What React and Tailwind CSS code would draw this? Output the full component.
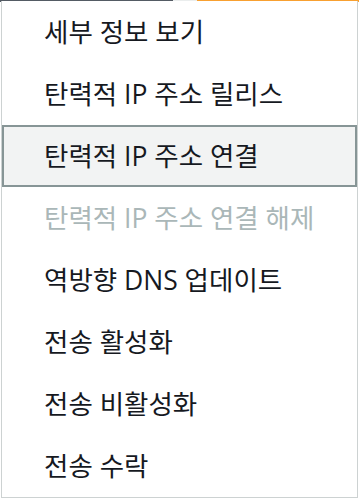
export default function App() {
  const items = [
    { label: "세부 정보 보기" },
    { label: "탄력적 IP 주소 릴리스" },
    { label: "탄력적 IP 주소 연결", active: true },
    { label: "탄력적 IP 주소 연결 해제", disabled: true },
    { label: "역방향 DNS 업데이트" },
    { label: "전송 활성화" },
    { label: "전송 비활성화" },
    { label: "전송 수락" },
  ];
  return (
    <div
      className="relative w-[359px] h-[500px] bg-white overflow-hidden"
      style={{ fontFamily: '"Open Sans", "Noto Sans CJK KR", sans-serif' }}
    >
      <div className="flex h-[2px]">
        <div className="w-[173px] bg-[#545b64]" />
        <div className="w-[24px] bg-[#eaeded]" />
        <div className="flex-1 bg-[#f8a030]" />
      </div>
      <div className="absolute left-[1px] top-[1px] w-[357px] border-x border-b border-[#cdd2d2] bg-white flex flex-col">
        {items.map((it, i) => (
          <div
            key={i}
            className={
              "h-[62px] flex items-center pl-[40px] border-2 text-[26.5px] leading-none " +
              (it.active
                ? "border-[#879596] bg-[#f2f3f3] text-[#16191f]"
                : it.disabled
                ? "border-transparent text-[#aab7b8]"
                : "border-transparent text-[#16191f]")
            }
          >
            {it.label}
          </div>
        ))}
      </div>
    </div>
  );
}
